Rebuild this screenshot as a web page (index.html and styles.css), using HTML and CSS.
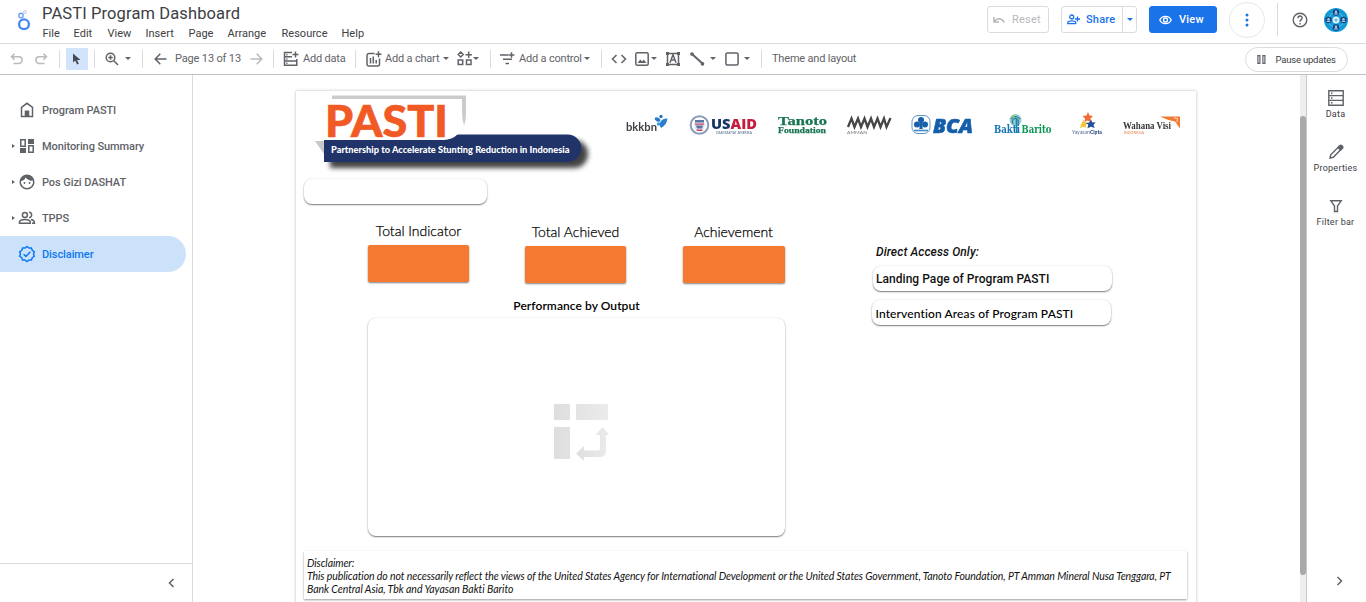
FILE: index.html
```html
<!DOCTYPE html>
<html lang="en">
<head>
<meta charset="utf-8">
<title>PASTI Program Dashboard</title>
<link rel="stylesheet" href="styles.css">
</head>
<body>
<header class="header">
  <svg class="brand" viewBox="0 0 14 22" fill="none"><circle cx="7" cy="15.300" r="4.900" stroke="#4285f4" stroke-width="2.300"/><circle cx="4" cy="6.500" r="2.200" stroke="#6ba0f6" stroke-width="1.400"/><circle cx="8" cy="3" r="1.400" stroke="#b5cffb" stroke-width="1"/></svg>
  <div class="heading">
    <h1 class="title">PASTI Program Dashboard</h1>
    <nav class="menu"><span>File</span><span>Edit</span><span>View</span><span>Insert</span><span>Page</span><span>Arrange</span><span>Resource</span><span>Help</span></nav>
  </div>
  <div class="actions">
    <div class="btn reset"><svg width="12" height="8" viewBox="0 0 12 8"><path d="M1 1v5h5M1.500 5.500C4 1.500 9 2 11.200 6.500" fill="none" stroke="#b6b8bb" stroke-width="1.600"/></svg><span>Reset</span></div>
    <div class="btn share"><span class="share-main"><svg width="13" height="11" viewBox="0 0 13 11" fill="none" stroke="#1a73e8" stroke-width="1.300"><circle cx="4.700" cy="3" r="2"/><path d="M.8 9.600V8.300C1.500 6.500 8 6.500 8.700 8.300v1.300zM10.500 2.500v5M8 5h5"/></svg><span>Share</span></span><span class="share-drop"><i class="caret"></i></span></div>
    <div class="btn view"><svg width="13" height="10" viewBox="0 0 13 10" fill="none" stroke="#fff" stroke-width="1.300"><path d="M.8 5C3 .2 10 .2 12.200 5 10 9.800 3 9.800.8 5z"/><circle cx="6.500" cy="5" r="2"/></svg><span>View</span></div>
    <div class="more"><svg width="4" height="14" viewBox="0 0 4 14" fill="#1a73e8"><circle cx="2" cy="2" r="1.500"/><circle cx="2" cy="7" r="1.500"/><circle cx="2" cy="12" r="1.500"/></svg></div>
    <div class="account"><svg width="16" height="16" viewBox="0 0 16 16" fill="none" stroke="#5f6368" stroke-width="1.400"><circle cx="8" cy="8" r="6.800"/><path d="M5.900 6.300C6 3.200 10.300 3.400 10.100 6.200 10 7.600 8 7.800 8 9.800M8 11v1.500"/></svg>
    <svg width="24" height="24" viewBox="0 0 24 24"><circle cx="12" cy="12" r="12" fill="#109bd7"/><circle cx="12" cy="12" r="7.500" fill="none" stroke="#5bc3e6"/><g fill="#173e7d"><circle cx="12" cy="4.500" r="3.200"/><circle cx="12" cy="19.500" r="3.200"/><circle cx="4.500" cy="12" r="3.200"/><circle cx="19.500" cy="12" r="3.200"/></g><g fill="#a9cff0"><circle cx="12" cy="3.700" r="1.200"/><path d="M10.200 6.500h3.600v-1.200h-3.600zM10.200 21.500h3.600v-1.200h-3.600zM2.700 14h3.600v-1.200H2.700zM17.700 14h3.600v-1.200h-3.600z"/><circle cx="12" cy="18.700" r="1.200"/><circle cx="4.500" cy="11.300" r="1.200"/><circle cx="19.500" cy="11.300" r="1.200"/></g><circle cx="12" cy="12" r="3.500" fill="#d8f0fa"/><circle cx="12" cy="12" r="1.500" fill="#70b9d9"/></svg></div>
  </div>
</header>

<div class="toolbar">
 <div class="tools">
  <svg class="pale" width="14" height="12" viewBox="0 0 14 12"><path d="M4.500.8 1.500 3.800l3 3M1.500 3.800h7.300a3.300 3.300 0 0 1 0 6.600H3.500"/></svg>
  <svg class="pale" width="14" height="12" viewBox="0 0 14 12"><path d="m8.500.8 3 3-3 3M11.500 3.800H4.200a3.300 3.300 0 0 0 0 6.600h5.300"/></svg>
  <i class="sep"></i>
  <span class="pointer"><svg width="10" height="12" viewBox="0 0 10 12"><path d="M1 .5v9l2.300-2 1.700 4 1.800-.8-1.700-3.800h3.400z" fill="#444b55" stroke="none"/></svg></span>
  <i class="sep"></i>
  <svg width="14" height="14" viewBox="0 0 14 14"><circle cx="5.500" cy="5.500" r="4.300"/><path d="m8.800 8.800 4.200 4.200M3.300 5.500h4.400M5.500 3.300v4.400"/></svg>
  <i class="caret"></i><i class="sep"></i>
  <svg width="13" height="12" viewBox="0 0 13 12"><path d="M12.500 6H1.200M6.300.8 1.200 6l5.100 5.200"/></svg>
  <span class="label num">Page 13 of 13</span>
  <svg class="pale" width="13" height="12" viewBox="0 0 13 12"><path d="M.5 6h11.300M6.700.8 11.800 6l-5.100 5.200"/></svg>
  <i class="sep"></i>
  <svg width="16" height="16" viewBox="0 0 16 16"><path d="M9 1.500H1.500v12.800h12.300V8M1.500 5.800H9M1.500 10h12.300M12.500.5v6M9.500 3.500h6M3.300 3.700h1.200M3.300 8h1.200M3.300 12.200h1.200"/></svg>
  <span class="label">Add data</span><i class="sep"></i>
  <svg width="16" height="16" viewBox="0 0 16 16"><path d="M8.500 2.500H3a2 2 0 0 0-2 2V13a2 2 0 0 0 2 2h8.500a2 2 0 0 0 2-2V7.500M4.500 7v5.500M7.300 5.500v7M10.200 9v3.500M12.500.3v6M9.500 3.300h6"/></svg>
  <span class="label">Add a chart</span><i class="caret"></i>
  <svg width="16" height="15" viewBox="0 0 16 15"><path d="M3.700 1 6.200 3.500 3.700 6 1.200 3.500zM11.700.5v6.400M8.500 3.700h6.400M1.200 9h4.500v4.500H1.200zM9.500 9H14v4.500H9.500z"/></svg>
  <i class="caret"></i><i class="sep"></i>
  <svg width="15" height="14" viewBox="0 0 15 14"><path d="M0 3h8.500M3 7.300h9M5.500 11.500h3.500M11.500.3v5.400M8.800 3h5.600"/></svg>
  <span class="label">Add a control</span><i class="caret"></i><i class="sep"></i>
  <svg width="16" height="10" viewBox="0 0 16 10"><path d="M5.500 1 1.500 5l4 4M10.500 1l4 4-4 4"/></svg>
  <svg width="14" height="14" viewBox="0 0 14 14"><rect x=".8" y=".8" width="12.400" height="12.400" rx="1.500"/><path d="m2.500 11 2.700-3.600 2 2 1.500-2 2.800 3.600z" fill="#5f6368" stroke="none"/></svg>
  <i class="caret"></i>
  <svg width="14" height="14" viewBox="0 0 14 14"><path d="M1.500 1.500h11v11h-11zM4 10.700l3-8 3 8M5 8h4"/><path d="M0 0h3v3H0zM11 0h3v3h-3zM0 11h3v3H0zM11 11h3v3h-3z" fill="#5f6368" stroke="none"/></svg>
  <svg width="15" height="14" viewBox="0 0 15 14"><path d="m2 2 11 10" stroke-width="2"/><circle cx="2" cy="2" r="1.100"/><circle cx="12.500" cy="11.800" r="1.100"/></svg>
  <i class="caret"></i>
  <svg width="14" height="14" viewBox="0 0 14 14"><rect x=".9" y=".9" width="12.200" height="12.200" rx="1.500"/></svg>
  <i class="caret"></i><i class="sep"></i><span class="label">Theme and layout</span>
 </div>
 <div class="pause"><svg width="9" height="9" viewBox="0 0 9 9" fill="none" stroke="#5f6368"><path d="M.9.600h2v7.800h-2zM5.900.600h2v7.800h-2z" stroke-width="1.200"/></svg><span>Pause updates</span></div>
</div>

<main class="main">
  <aside class="sidebar">
    <nav class="pages">
      <div class="page"><b></b><svg viewBox="0 0 18 18"><path d="M3.500 6.300 9 2.300l5.500 4v9.200h-11z"/><path d="M6.700 9.500h4.600V15H6.700z" fill="#5f6368" stroke="none"/></svg><span>Program PASTI</span></div>
      <div class="page"><b class="arrow"></b><svg viewBox="0 0 18 18"><path d="M2.800 2.800h4.400v6.400H2.800zM10.800 8.800h4.400v6.400h-4.400z"/><path d="M10 2h6v5h-6zM2 11h6v5H2z" fill="#5f6368" stroke="none"/></svg><span>Monitoring Summary</span></div>
      <div class="page"><b class="arrow"></b><svg viewBox="0 0 18 18"><circle cx="9" cy="9" r="6.800"/><path d="M2.500 8C5 8 7 6.500 7.500 4.500 9.500 7 12 8 15.500 7.500 14.500 0 4 .5 2.500 8z" fill="#5f6368" stroke="none"/><circle cx="6.500" cy="10" r=".9" fill="#5f6368" stroke="none"/><circle cx="11.500" cy="10" r=".9" fill="#5f6368" stroke="none"/></svg><span>Pos Gizi DASHAT</span></div>
      <div class="page"><b class="arrow"></b><svg viewBox="0 0 18 18"><circle cx="6.900" cy="6" r="2.500"/><path d="M1.500 14.300v-1.500c1-3 9.800-3 10.800 0v1.500zM11 3.300c3.500-.5 3.500 5.700 0 5.200M13 10.500c2.500.5 3.500 1.500 3.500 3.800H14"/></svg><span>TPPS</span></div>
      <div class="page selected"><b></b><svg viewBox="0 0 18 18"><path d="M9 1.500 11 3l2.500-.1.700 2.400 2.100 1.400L15.500 9l.8 2.300-2.100 1.400-.7 2.400L11 15l-2 1.500L7 15l-2.500.1-.7-2.400-2.100-1.400L2.500 9l-.8-2.300 2.100-1.400.7-2.400L7 3z"/><path d="m5.600 9.200 2.300 2.200 4.500-4.600"/></svg><span>Disclaimer</span></div>
    </nav>
    <div class="fold"><svg width="7" height="10" viewBox="0 0 7 10"><path d="M5.500 1 1.500 5l4 4"/></svg></div>
  </aside>

  <section class="stage">
   <div class="sheet">
    <div class="banner">
      <svg class="pasti" width="300" height="86" viewBox="296 91 300 86">
        <defs><filter id="soft" x="-10%" y="-50%" width="120%" height="220%"><feGaussianBlur stdDeviation="2.700"/></filter></defs>
        <path d="M330 140h244a13 13 0 0 1 0 28H330z" fill="#222" opacity=".85" filter="url(#soft)"/>
        <path d="M315 141h18v21h-9v-8z" fill="#c7c8ca"/>
        <path d="M324 134.500h243.500a13.800 13.800 0 0 1 0 27.600H324z" fill="#213469"/>
        <path d="M322 97h141v24a19 19 0 0 1-19 19H322z" fill="#fff"/>
        <path d="M332 95.500h134v17q0 8-2 13-2-6-2-14V99H332z" fill="#cacbcd"/>
        <text x="325" y="136.500" class="pasti-name" textLength="123" lengthAdjust="spacingAndGlyphs">PASTI</text>
        <text x="331" y="152.500" class="pasti-line" textLength="238.500" lengthAdjust="spacingAndGlyphs">Partnership to Accelerate Stunting Reduction in Indonesia</text>
      </svg>
      <svg class="partners" width="600" height="50" viewBox="596 100 600 50">
        <g class="bkkbn"><text x="626" y="131" textLength="31" lengthAdjust="spacingAndGlyphs">bkkbn</text><ellipse cx="657.500" cy="119.500" rx="3" ry="1.800" fill="#237cca" transform="rotate(25 657.500 119.500)"/><path d="M661 128q-3-5 1-8 2-2 5.500-1.500-1 7-6.500 9.500z" fill="#2a7fcf"/><circle cx="661" cy="116.500" r="1.700" fill="#2675bb"/><circle cx="658.500" cy="124" r="1.700" fill="#3999df"/></g>
        <circle cx="699.500" cy="125" r="8.800" fill="#fff" stroke="#8b9bb8" stroke-width="2"/><circle cx="699.500" cy="125" r="5.600" fill="#dfe5ef"/><path d="M695 120h9v2.500h-9zM696 125.500h7l-1 3h-5z" fill="#5b74a3"/><path d="M695 123.500h9v1.200h-9zM696.500 129.500h6v1.500h-6z" fill="#c84a65"/>
        <text x="711" y="129" class="usaid" textLength="46" lengthAdjust="spacingAndGlyphs"><tspan fill="#183767">US</tspan><tspan fill="#c51c3c">AID</tspan></text>
        <text x="716" y="133.500" font-size="3" fill="#4b638a" textLength="36" lengthAdjust="spacingAndGlyphs">DARI RAKYAT AMERIKA</text>
        <text x="778" y="125" class="tanoto big" textLength="49" lengthAdjust="spacingAndGlyphs">Tanoto</text><text x="778" y="133" class="tanoto" textLength="48" lengthAdjust="spacingAndGlyphs">Foundation</text>
        <path d="m848 127 3.500-8.500 3 8.500 3.500-8.500 3 8.500 3.500-8.500 3 8.500 3.500-8.500 3 8.500 3.500-8.500 3 8.500 3.500-8.500 2.500 8.500 4-9" fill="none" stroke="#464646" stroke-width="2.300"/><text x="847" y="134" font-size="4" fill="#777" textLength="20" lengthAdjust="spacingAndGlyphs">AMMAN</text>
        <rect x="912" y="115.500" width="18" height="18" rx="6" fill="#fff" stroke="#5c93c7"/><g fill="#165faa"><circle cx="921" cy="120" r="3"/><circle cx="917" cy="124.500" r="3"/><circle cx="925" cy="124.500" r="3"/><path d="M920 121h2l.7 8h-3.400z"/></g><path d="M914 130.500h14" stroke="#4388c1" stroke-width="1.600"/>
        <text x="933" y="132.500" class="bca" textLength="40" lengthAdjust="spacingAndGlyphs">BCA</text>
        <circle cx="1015.500" cy="120" r="6" fill="#8fcbd5"/><path d="M1011 119q4.500-5 9 0M1013 124q-2-4 2.500-6 4 2 2.500 6" fill="none" stroke="#287c98" stroke-width="1.200"/><path d="M1015.700 119v14h2l-.7-14z" fill="#1c87a8"/><circle cx="1013" cy="116.500" r="1.200" fill="#98cc48"/>
        <text x="994" y="133" class="bakti" fill="#1173b5" textLength="26" lengthAdjust="spacingAndGlyphs">Bakti</text><text x="1021.500" y="133" class="bakti" fill="#0c9655" textLength="30" lengthAdjust="spacingAndGlyphs">Barito</text>
        <path d="m1088 112 1.500 3.500 3.500.5-2.500 2.500.5 3.500-3.500-1.500-3 1.500.5-3.500-2.500-2.500 4-.5z" fill="#ef6d32"/><path d="m1083.500 120 2 2.600 2.300.2-2 2.500.5 2.500-3.300-1-3 1.500 1-4z" fill="#f6c43e"/><path d="m1091 119.500 1.200 2.800 3.300.2-2 2.600 1.200 2.800-3.700-1.200-3.500 1.500.7-3.600-2.500-1.500 3.500-.5z" fill="#254e9b"/>
        <text x="1072" y="134" font-size="5.800" fill="#526994" textLength="30" lengthAdjust="spacingAndGlyphs">Yayasan<tspan font-weight="bold" fill="#193977">Cipta</tspan></text>
        <path d="M1160 116.500h20v12l-5-7q-7-1-15-5z" fill="#f27932"/><path d="m1174 118 3.500.4-.5 4" fill="none" stroke="#fff" stroke-width=".7"/>
        <text x="1123" y="128.500" class="wahana" textLength="48" lengthAdjust="spacingAndGlyphs">Wahana Visi</text><text x="1124" y="133.500" font-size="3.800" fill="#e98250" textLength="20" lengthAdjust="spacingAndGlyphs">INDONESIA</text>
      </svg>
    </div>
    <div class="card filter"></div>
    <div class="body">
      <div class="left">
        <div class="scores">
          <div class="score"><span>Total Indicator</span><div class="value"></div></div>
          <div class="score lower"><span>Total Achieved</span><div class="value"></div></div>
          <div class="score lower"><span>Achievement</span><div class="value wide"></div></div>
        </div>
        <div class="caption">Performance by Output</div>
        <div class="card chart"><svg width="56" height="56" viewBox="0 0 56 56"><defs><linearGradient id="fade" x2="1"><stop stop-color="#dedede"/><stop offset="1" stop-color="#ebebeb"/></linearGradient></defs><g fill="url(#fade)"><path d="M1 0h16v16H1zM23 0h32v16H23zM1 23h16v32H1z"/><path d="M23 49.500 31 42v4.500h14q2 0 2-2V31h-4.500l7-8 7 8H53v16q0 6-6 6H31v4z"/></g></svg></div>
      </div>
      <div class="links">
        <p class="access">Direct Access Only:</p>
        <div class="card link roboto">Landing Page of Program PASTI</div>
        <div class="card link lato">Intervention Areas of Program PASTI</div>
      </div>
    </div>
    <div class="disclaimer"><div>Disclaimer:</div><div>This publication do not necessarily reflect the views of the United States Agency for International Development or the United States Government, Tanoto Foundation, PT Amman Mineral Nusa Tenggara, PT</div><div class="last">Bank Central Asia, Tbk and Yayasan Bakti Barito</div></div>
   </div>
  </section>
  <div class="scroll"><div class="thumb"></div></div>
  <aside class="rail">
    <div class="tool"><svg viewBox="0 0 16 16"><path d="M.8.800h14.400v14.400H.8zM.8 5.600h14.400M.8 10.400h14.400M3 3.200h1.500M3 8h1.500M3 12.800h1.500"/></svg><span>Data</span></div>
    <div class="tool"><svg viewBox="0 0 16 16"><path d="m2 14 .7-3.200L11 2.500l2.500 2.500-8.300 8.300z"/><path d="m10 3.500 1.800-1.800q1-1 2 0l.6.6q1 1 0 2L12.500 6z" fill="#5f6368"/></svg><span>Properties</span></div>
    <div class="tool"><svg viewBox="0 0 16 16"><path d="M2.800 2.800h10.400L9.500 8v5.500h-3V8z"/></svg><span>Filter bar</span></div>
    <svg class="expand" width="7" height="10" viewBox="0 0 7 10"><path d="m1.500 1 4 4-4 4"/></svg>
  </aside>
</main>
</body>
</html>
```
FILE: styles.css
```css
* { box-sizing: border-box; }
body { margin: 0; width: 1366px; height: 602px; overflow: hidden; background: #fff; color: #3c4043; font-family: Roboto, sans-serif; display: flex; flex-direction: column; }
svg { display: block; flex: none; }
.header { height: 44px; flex: none; border-bottom: 1px solid #dadce0; display: flex; }
.brand { width: 14px; height: 22px; margin: 9px 0 0 17px; }
.heading { margin-left: 11px; flex: 1; }
.title { margin: 4px 0 0; font-size: 16.5px; line-height: 20px; font-weight: 400; letter-spacing: .12px; white-space: nowrap; }
.menu { display: grid; grid-template-columns: 31px 34px 38px 43px 39px 54px 60px 40px; padding-left: .5px; margin-top: 2px; font-size: 11px; line-height: 15px; letter-spacing: .02px; }
.actions { display: flex; align-items: flex-start; }
.btn { height: 27px; margin-top: 6px; border: 1px solid #dadce0; border-radius: 3px; display: flex; align-items: center; font-size: 11px; font-weight: 500; letter-spacing: .2px; }
.reset { width: 62px; padding-left: 5px; gap: 7px; color: #b6b8bb; font-weight: 400; }
.share { width: 76px; margin-left: 12px; color: #1a73e8; }
.share-main { width: 61px; height: 100%; display: flex; align-items: center; gap: 6px; padding-left: 5px; border-right: 1px solid #dadce0; }
.share-drop { color: #1a73e8; padding-left: 4px; }
.view { width: 68px; margin-left: 12px; padding-left: 9px; gap: 7px; background: #1a73e8; border-color: #1a73e8; color: #fff; }
.more { width: 36px; height: 36px; margin: 2px 0 0 12px; border: 1px solid #e5e7e9; border-radius: 50%; display: flex; align-items: center; justify-content: center; }
.account { height: 33px; margin: 3px 18px 0 12px; padding-left: 14px; border-left: 1px solid #dadce0; display: flex; align-items: center; gap: 16px; }
.caret { display: block; width: 0; height: 0; border: 3.500px solid transparent; border-top-color: currentColor; border-bottom: 0; }

.toolbar { height: 31px; flex: none; border-bottom: 1px solid #bdc1c6; display: flex; justify-content: space-between; color: #5f6368; }
.tools { flex: 1; height: 29px; display: grid; align-items: center; padding-left: 10px; grid-template-columns: 25px 24px 7px 28px 11px 20px 17px 12px 21px 75px 23px 10px 20px 52px 11px 19px 58px 14px 16px 17px 10px 19px 65px 17px 10px 24px 16px 15px 24px 20px 15px 19px 17px 11px 1fr; }
.tools svg { fill: none; stroke: #5f6368; stroke-width: 1.500; }
.tools svg.pale { stroke: #b8babd; }
.sep { width: 1px; height: 18px; background: #dadce0; }
.pointer { width: 22px; height: 22px; background: #d2e3fc; border-radius: 1px; display: flex; align-items: center; justify-content: center; }
.label { font-size: 11px; white-space: nowrap; line-height: 14px; letter-spacing: -.19px; padding-top: 1px; }
.label.num { letter-spacing: -.15px; }
.pause { width: 103px; height: 25px; margin: 3px 18px 0 0; border: 1px solid #dadce0; border-radius: 13px; display: flex; align-items: center; gap: 9.5px; padding-left: 11px; font-size: 9.5px; letter-spacing: -.2px; color: #3c4043; white-space: nowrap; }

.main { flex: 1; min-height: 0; display: flex; }
.sidebar { width: 193px; border-right: 1px solid #dadce0; display: flex; flex-direction: column; justify-content: space-between; }
.pages { padding-top: 17px; }
.page { height: 36px; width: 186px; display: grid; grid-template-columns: 18px 24px 1fr; align-items: center; color: #5f6368; font-size: 11px; font-weight: 500; letter-spacing: -.08px; }
.page svg { width: 18px; height: 18px; fill: none; stroke: #5f6368; stroke-width: 1.500; }
.page.selected { background: #cce2fb; color: #0b78f0; border-radius: 0 18px 18px 0; }
.page.selected svg { stroke: #0b78f0; }
.arrow { width: 0; height: 0; margin-left: 12px; border: 2.500px solid transparent; border-left: 3px solid #5f6368; border-right: 0; }
.fold { height: 39px; border-top: 1px solid #dadce0; display: flex; justify-content: flex-end; align-items: center; padding-right: 17px; }
.fold svg, .expand { fill: none; stroke: #5f6368; stroke-width: 1.500; }

.stage { width: 1107px; padding: 16px 0 0 103px; overflow: hidden; }
.sheet { width: 900px; height: 530px; box-shadow: 0 0 3px #bbb; color: #111; }
.banner { height: 87px; display: flex; }
.partners { margin-top: 9px; font-family: Lato, sans-serif; filter: blur(.3px); }
.pasti-name { font: 900 43.500px Lato, sans-serif; fill: #f15a25; stroke: #f15a25; stroke-width: .6px; }
.pasti-line { font: 900 9px Lato, sans-serif; fill: #fff; }
.bkkbn { font: 700 11px Lato, sans-serif; fill: #3f4146; }
.usaid { font: 900 14px "Open Sans", sans-serif; }
.tanoto { font: 700 9px "Liberation Serif", serif; fill: #197451; stroke: #197451; stroke-width: .25px; }
.tanoto.big { font-size: 12px; }
.bca { font: italic 900 19.500px "Open Sans", sans-serif; fill: #155fa9; stroke: #155fa9; stroke-width: .6px; }
.bakti { font: 700 11px "DejaVu Serif", serif; }
.wahana { font: 700 9.5px "Liberation Serif", serif; fill: #363636; }
.card { background: #fff; border-radius: 8px; box-shadow: 0 1px 1.500px rgba(0,0,0,.5), 0 0 2px rgba(0,0,0,.1); }
.filter { width: 183px; height: 25px; margin-left: 8px; margin-top: 1px; }
.body { display: grid; grid-template-columns: 489px 1fr; padding-left: 72px; height: 347px; }
.left { width: 417px; }
.scores { display: grid; grid-template-columns: 157px 158px 102px; height: 82px; padding-top: 19px; font: 300 14px/16px Lato, sans-serif; color: #000; -webkit-text-stroke: .25px #000; }
.score { width: 101px; text-align: center; white-space: nowrap; }
.lower { padding-top: 1px; }
.value { width: 101px; height: 37px; margin-top: 6px; background: #f57931; border-radius: 2px; box-shadow: 0 1px 2px rgba(0,0,0,.5); }
.value.wide { width: 102px; }
.caption { height: 32px; padding-top: 12px; text-align: center; font: 600 12px/16px Lato, sans-serif; letter-spacing: .06px; color: #000; }
.chart { height: 218px; display: flex; align-items: center; justify-content: center; }
.chart svg { margin: 10px 0 0 8px; }
.links { width: 240px; margin-left: 16px; padding-top: 41px; }
.access { margin: 0 0 7px 3px; font: italic 500 12px/14px Roboto, sans-serif; letter-spacing: .1px; }
.link { width: 239px; height: 25px; padding-left: 3px; display: flex; align-items: center; font-size: 12px; white-space: nowrap; }
.roboto { font-weight: 500; letter-spacing: .04px; }
.lato { margin: 9px 0 0 -1px; font-family: Lato, sans-serif; font-weight: 500; padding-left: 3.5px; padding-top: 2px; letter-spacing: .12px; color: #000; }
.disclaimer { width: 883px; height: 48px; margin-left: 8px; padding: 6px 3px; background: #fff; box-shadow: 0 1px 2px rgba(0,0,0,.4); font: italic 10.500px/13px Lato, sans-serif; letter-spacing: -.09px; white-space: nowrap; }
.last { letter-spacing: -.05px; }
.scroll { width: 6px; background: #eee; padding-top: 41px; }
.thumb { width: 6px; height: 459px; background: #a9a9a9; border-radius: 3px; }
.rail { width: 60px; border-left: 1px solid #c8cacf; padding: 15px 2px 0 0; text-align: center; display: flex; flex-direction: column; }
.tool { height: 54px; display: flex; flex-direction: column; align-items: center; font-size: 9px; line-height: 12px; gap: 2px; letter-spacing: .25px; white-space: nowrap; }
.tool svg { width: 16px; height: 16px; fill: none; stroke: #5f6368; stroke-width: 1.400; }
.expand { margin: auto 0 16px 29px; }
```
